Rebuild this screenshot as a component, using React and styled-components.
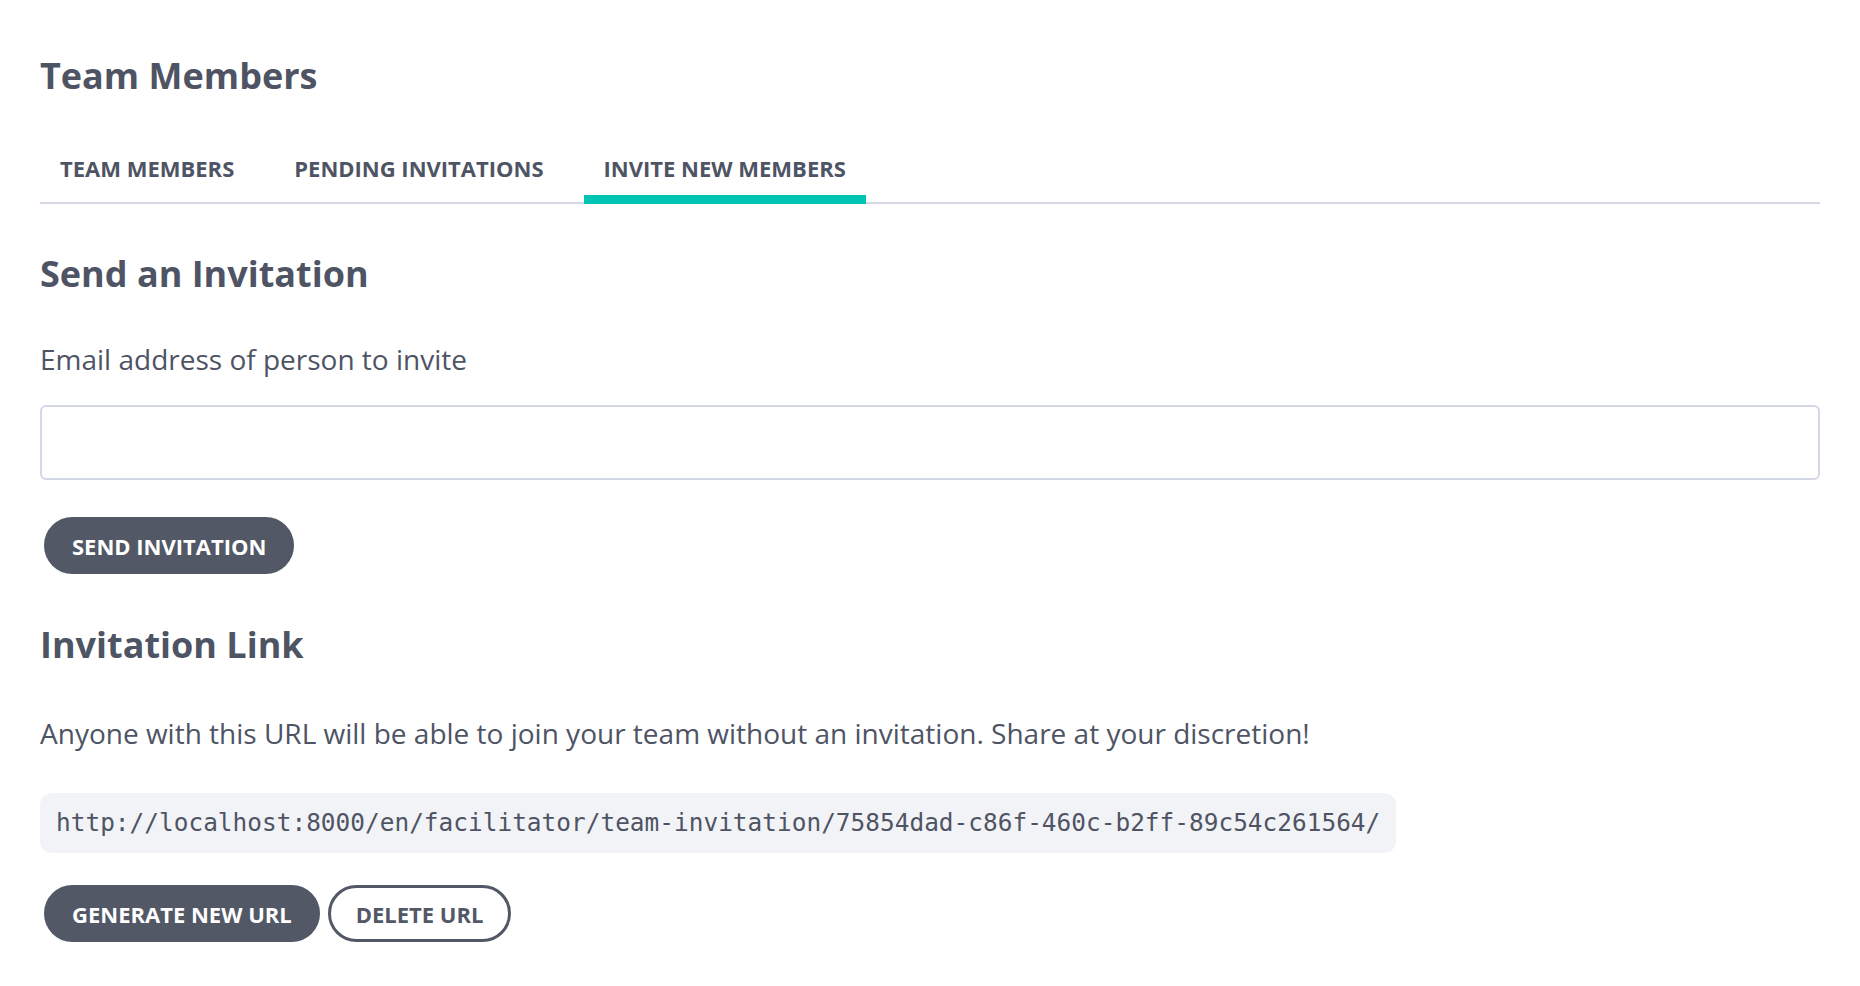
import React, { useState } from "react";
import styled, { createGlobalStyle } from "styled-components";

const inviteUrl =
  "http://localhost:8000/en/facilitator/team-invitation/75854dad-c86f-460c-b2ff-89c54c261564/";

const tabs = ["Team Members", "Pending Invitations", "Invite New Members"];

function App() {
  const [active, setActive] = useState(2);
  const [email, setEmail] = useState("");

  return (
    <Page>
      <GlobalStyle />
      <PageTitle>Team Members</PageTitle>

      <TabBar>
        {tabs.map((label, i) => (
          <Tab key={label} $active={i === active} onClick={() => setActive(i)}>
            {label}
          </Tab>
        ))}
      </TabBar>

      {/* invite by email */}
      <SectionTitle>Send an Invitation</SectionTitle>
      <Label htmlFor="invite-email">Email address of person to invite</Label>
      <Input
        id="invite-email"
        type="email"
        value={email}
        onChange={(e) => setEmail(e.target.value)}
      />
      <ButtonRow>
        <Button>Send Invitation</Button>
      </ButtonRow>

      {/* invite by link */}
      <SectionTitle $gap="45px">Invitation Link</SectionTitle>
      <Text>
        Anyone with this URL will be able to join your team without an
        invitation. Share at your discretion!
      </Text>
      <UrlBox>{inviteUrl}</UrlBox>
      <ButtonRow $gap="28px">
        <Button>Generate New URL</Button>
        <Button $outline>Delete URL</Button>
      </ButtonRow>
    </Page>
  );
}

export default App;

const GlobalStyle = createGlobalStyle`
  html, body {
    margin: 0;
    background: #ffffff;
  }
  body {
    font-family: "Open Sans", "Liberation Sans", sans-serif;
    color: #4e5464;
  }
  * {
    box-sizing: border-box;
  }
`;

const Page = styled.div`
  padding: 52px 40px 40px;
  display: flex;
  flex-direction: column;
  align-items: flex-start;
`;

const PageTitle = styled.h1`
  margin: 0;
  font-size: 36px;
  line-height: 48px;
  font-weight: 700;
  color: #4e5464;
`;

const TabBar = styled.div`
  align-self: stretch;
  display: flex;
  gap: 20px;
  margin-top: 55px;
  border-bottom: 2px solid #d6d9e4;
`;

const Tab = styled.button`
  font-family: "Open Sans", "Liberation Sans", sans-serif;
  font-size: 22px;
  line-height: 27px;
  font-weight: 700;
  text-transform: uppercase;
  color: #4e5464;
  background: none;
  border: none;
  padding: 0 20px 13px;
  margin-bottom: -2px;
  border-bottom: 9px solid ${(p) => (p.$active ? "#00c4b3" : "transparent")};
  cursor: pointer;
`;

const SectionTitle = styled.h2`
  margin: ${(p) => p.$gap || "48px"} 0 0;
  font-size: 36px;
  line-height: 44px;
  font-weight: 700;
  color: #4e5464;
`;

const Label = styled.label`
  display: block;
  margin-top: 45px;
  font-size: 28px;
  line-height: 36px;
`;

const Input = styled.input`
  align-self: stretch;
  margin-top: 28px;
  height: 75px;
  border: 2px solid #d4d8e6;
  border-radius: 6px;
  padding: 0 18px;
  font-family: "Open Sans", "Liberation Sans", sans-serif;
  font-size: 26px;
  color: #4e5464;
  outline: none;
`;

const ButtonRow = styled.div`
  display: flex;
  margin-top: ${(p) => p.$gap || "33px"};
`;

const Button = styled.button`
  margin: 4px;
  height: 57px;
  padding: 0 25px;
  border-radius: 999px;
  border: 3px solid #525866;
  background: ${(p) => (p.$outline ? "#ffffff" : "#525866")};
  color: ${(p) => (p.$outline ? "#525866" : "#ffffff")};
  font-family: "Open Sans", "Liberation Sans", sans-serif;
  font-size: 22px;
  font-weight: 700;
  text-transform: uppercase;
  cursor: pointer;
`;

const Text = styled.p`
  margin: 48px 0 0;
  font-size: 28px;
  line-height: 36px;
`;

const UrlBox = styled.code`
  display: block;
  margin-top: 42px;
  height: 60px;
  line-height: 60px;
  padding: 0 16px;
  border-radius: 12px;
  background: #f2f3f6;
  font-family: "DejaVu Sans Mono", "Liberation Mono", monospace;
  font-size: 24.4px;
  letter-spacing: 0.03px;
  color: #4e5464;
  white-space: nowrap;
`;
